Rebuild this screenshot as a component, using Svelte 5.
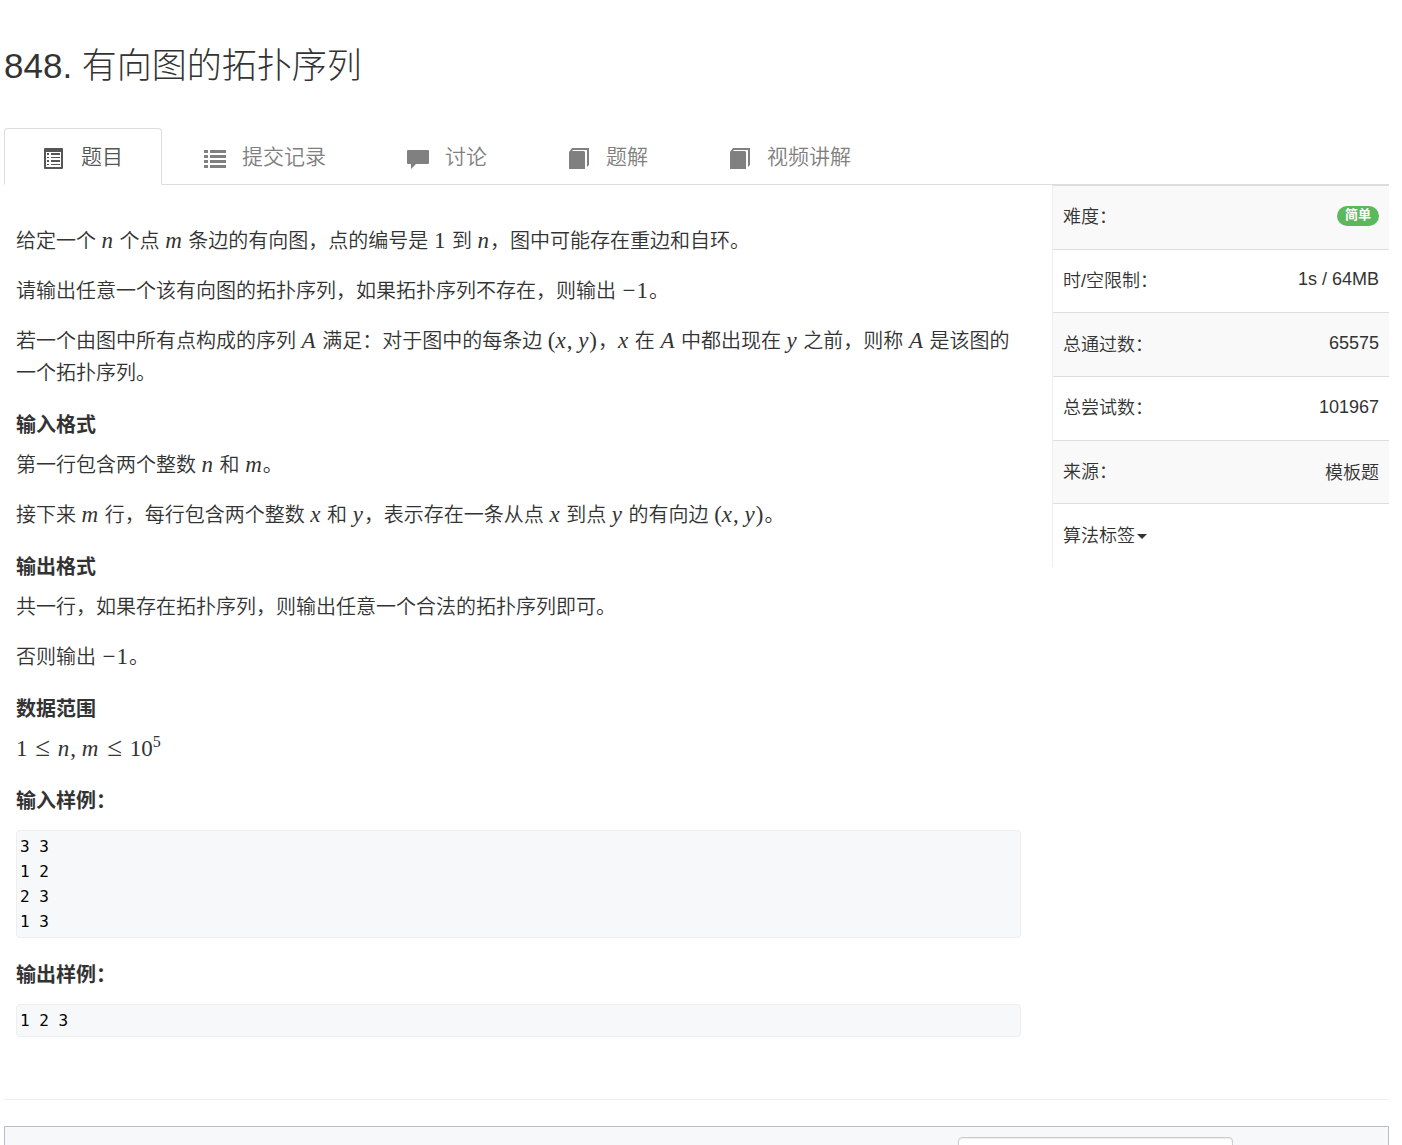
<script lang="ts">
  type IconName = "detail" | "list" | "comment" | "book";

  interface Tab {
    label: string;
    icon: IconName;
  }

  const tabs: Tab[] = [
    { label: "题目", icon: "detail" },
    { label: "提交记录", icon: "list" },
    { label: "讨论", icon: "comment" },
    { label: "题解", icon: "book" },
    { label: "视频讲解", icon: "book" },
  ];

  const stats = [
    { label: "时/空限制：", value: "1s / 64MB" },
    { label: "总通过数：", value: "65575" },
    { label: "总尝试数：", value: "101967" },
    { label: "来源：", value: "模板题" },
  ];

  const sampleInput = "3 3\n1 2\n2 3\n1 3";
  const sampleOutput = "1 2 3";

  let active = $state(0);
</script>

{#snippet icon(name: IconName)}
  <svg class="icon" viewBox="0 0 22 22" aria-hidden="true">
    {#if name === "detail"}
      <path
        fill-rule="evenodd"
        d="M2 0h17a1 1 0 0 1 1 1v19a1 1 0 0 1-1 1H2a1 1 0 0 1-1-1V1a1 1 0 0 1 1-1zM3 4v15h15V4z"
      />
      <path d="M4 5h2v2H4zM4 9h2v1H4zM4 12h2v2H4zM4 16h2v1H4zM8 5h9v2H8zM8 9h9v1H8zM8 12h9v2H8zM8 16h9v1H8z" />
    {:else if name === "list"}
      <path d="M0 2h4v3H0zM0 7h4v3H0zM0 12h4v3H0zM0 17h4v3H0zM6 2h16v3H6zM6 7h16v3H6zM6 12h16v3H6zM6 17h16v3H6z" />
    {:else if name === "comment"}
      <path d="M1 2h20a1 1 0 0 1 1 1v12a1 1 0 0 1-1 1H9l-5 5v-5H1a1 1 0 0 1-1-1V3a1 1 0 0 1 1-1z" />
    {:else}
      <path d="M1 4l3-4h17v17l-2 2V2H5L4 3h12l1 1v17H1z" />
    {/if}
  </svg>
{/snippet}

<div class="page">
  <h1>848. 有向图的拓扑序列</h1>

  <nav class="tabs">
    {#each tabs as tab, i}
      <a
        href="#tab-{i}"
        class="tab"
        class:active={active === i}
        onclick={() => (active = i)}
      >
        {@render icon(tab.icon)}
        <span>{tab.label}</span>
      </a>
    {/each}
  </nav>

  <div class="content">
    <main class="problem">
      <p>给定一个 <i>n</i> 个点 <i>m</i> 条边的有向图，点的编号是 <b>1</b> 到 <i>n</i>，图中可能存在重边和自环。</p>
      <p>请输出任意一个该有向图的拓扑序列，如果拓扑序列不存在，则输出 <b><span class="minus">−</span>1</b>。</p>
      <p>若一个由图中所有点构成的序列 <i>A</i> 满足：对于图中的每条边 <b>(<i>x</i>, <i>y</i>)</b>，<i>x</i> 在 <i>A</i> 中都出现在 <i>y</i> 之前，则称 <i>A</i> 是该图的一个拓扑序列。</p>

      <h4>输入格式</h4>
      <p>第一行包含两个整数 <i>n</i> 和 <i>m</i>。</p>
      <p>接下来 <i>m</i> 行，每行包含两个整数 <i>x</i> 和 <i>y</i>，表示存在一条从点 <i>x</i> 到点 <i>y</i> 的有向边 <b>(<i>x</i>, <i>y</i>)</b>。</p>

      <h4>输出格式</h4>
      <p>共一行，如果存在拓扑序列，则输出任意一个合法的拓扑序列即可。</p>
      <p>否则输出 <b><span class="minus">−</span>1</b>。</p>

      <h4>数据范围</h4>
      <p><b>1 <span class="rel">≤</span> <i>n</i>, <i>m</i> <span class="rel">≤</span> 10<sup>5</sup></b></p>

      <h4>输入样例：</h4>
      <pre>{sampleInput}</pre>

      <h4>输出样例：</h4>
      <pre>{sampleOutput}</pre>
    </main>

    <aside>
      <table>
        <tbody>
          <tr>
            <th scope="row">难度：</th>
            <td><span class="badge">简单</span></td>
          </tr>
          {#each stats as stat}
            <tr>
              <th scope="row">{stat.label}</th>
              <td>{stat.value}</td>
            </tr>
          {/each}
          <tr>
            <th colspan="2">
              <button type="button">算法标签<span class="caret"></span></button>
            </th>
          </tr>
        </tbody>
      </table>
    </aside>
  </div>

  <hr />

  <div class="editor-bar">
    <select aria-label="Language"></select>
  </div>
</div>

<style>
  :global(body) {
    background: #fff;
  }

  .page {
    padding: 41px 13px 0 4px;
    color: #333;
    font-family: "Liberation Sans", "Noto Sans CJK SC", sans-serif;
    font-size: 20px;
    font-weight: 350;
  }

  h1 {
    margin: 0 0 37px;
    font-size: 35px;
    font-weight: 300;
    line-height: 50px;
  }

  .tabs {
    display: flex;
    gap: 3px;
    border-bottom: 1px solid #ddd;
  }

  .tab {
    display: flex;
    align-items: center;
    gap: 16px;
    height: 52px;
    margin-bottom: -1px;
    padding: 0 38px 3px;
    border: 1px solid transparent;
    border-radius: 4px 4px 0 0;
    color: #808080;
    font-size: 21px;
    text-decoration: none;
  }

  .tab.active {
    border-color: #ddd;
    border-bottom-color: #fff;
    background: #fff;
    color: #555;
  }

  .icon {
    flex: none;
    width: 22px;
    height: 22px;
    margin-top: 8px;
    fill: currentColor;
  }

  .content {
    display: flex;
    align-items: flex-start;
  }

  .problem {
    flex: 1;
    min-width: 0;
    padding: 40px 31px 0 12px;
  }

  .problem p {
    margin: 0 0 18px;
    line-height: 32px;
  }

  .problem h4 {
    margin: 25px 0 13px;
    font-size: 20px;
    font-weight: 700;
    line-height: 22px;
  }

  .problem i,
  .problem b {
    margin-right: 1px;
    font-family: "Liberation Serif", serif;
    font-size: 23px;
    font-weight: 400;
    line-height: 1;
  }

  .problem sup {
    font-size: 16px;
    line-height: 0;
    vertical-align: 9px;
  }

  .minus {
    margin: 0 1px;
  }

  .rel {
    margin: 0 2px;
    font-size: 27px;
    line-height: 1;
  }

  .problem pre {
    margin: 18px 0 26px;
    padding: 3px;
    border: 1px solid #eee;
    border-radius: 4px;
    background: #f7f8fa;
    color: #000;
    font-family: "DejaVu Sans Mono", monospace;
    font-size: 16px;
    font-weight: 400;
    line-height: 25px;
  }

  aside {
    flex: 0 0 337px;
  }

  table {
    width: 100%;
    height: 382px;
    border-collapse: separate;
    border-spacing: 0;
    border-left: 1px solid #eee;
    font-size: 18px;
  }

  th,
  td {
    padding: 0 10px 4px;
    border-top: 1px solid #ddd;
    font-weight: inherit;
    text-align: left;
  }

  td {
    padding-bottom: 2px;
    text-align: right;
  }

  tr:nth-child(odd) > * {
    background: #f9f9f9;
  }

  tr:last-child > * {
    background: #fff;
  }

  .badge {
    display: inline-block;
    padding: 0 8px 2px;
    border-radius: 10px;
    background: #5cb85c;
    color: #fff;
    font-size: 13px;
    font-weight: 700;
    line-height: 18px;
    vertical-align: 3px;
  }

  button {
    padding: 0;
    border: 0;
    background: none;
    color: inherit;
    font: inherit;
    cursor: pointer;
  }

  .caret {
    display: inline-block;
    margin-left: 2px;
    border: 5px solid transparent;
    border-top-color: currentColor;
    border-bottom: 0;
    vertical-align: middle;
  }

  hr {
    margin: 36px 0 26px;
    border: 0;
    border-top: 1px solid #eee;
  }

  .editor-bar {
    display: flex;
    justify-content: flex-end;
    padding: 10px 155px 10px 10px;
    border: 1px solid #b9bdc9;
    background: #f7f8fa;
  }

  select {
    width: 275px;
    height: 40px;
    border: 1px solid #ccc;
    border-radius: 4px;
    background: #fff;
    box-shadow: inset 0 1px 1px rgba(0, 0, 0, 0.075);
    appearance: none;
  }
</style>
